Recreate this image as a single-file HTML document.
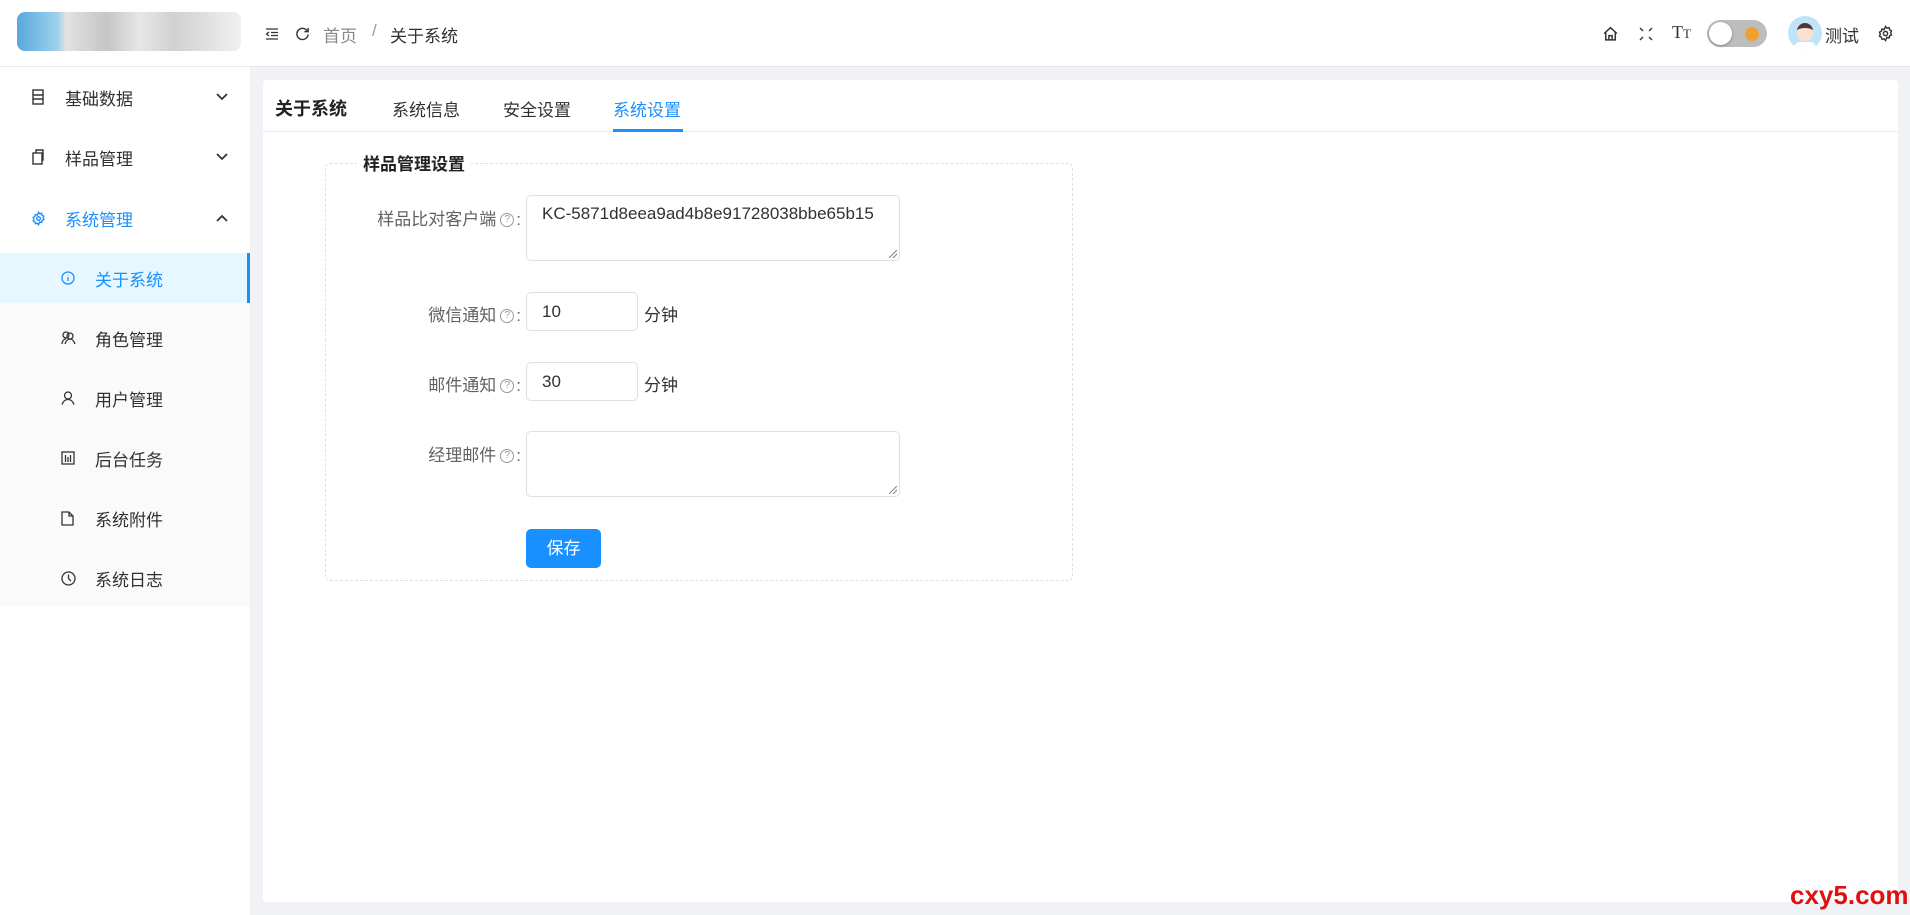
<!DOCTYPE html>
<html><head><meta charset="utf-8"><style>
*{box-sizing:border-box;margin:0;padding:0}
body{width:1910px;height:915px;background:#f0f2f5;font-family:"Liberation Sans","Noto Sans CJK SC",sans-serif;color:#333;position:relative;overflow:hidden;font-size:17px}
.hdr{position:absolute;left:0;top:0;width:1910px;height:67px;background:#fff;border-bottom:1px solid #e6e8eb}
.abs{position:absolute}
.side{position:absolute;left:0;top:67px;width:250px;height:848px;background:#fff}
.item{position:absolute;left:0;width:250px;height:60px;display:flex;align-items:center;font-size:17px;color:#303133}
.item svg{position:absolute}
.sub{background:#fafafa}
.card{position:absolute;left:263px;top:80px;width:1635px;height:822px;background:#fff;border-radius:4px}
.tabs{position:absolute;left:0;top:0;width:100%;height:52px;border-bottom:1px solid #e8eaec}
.fs{position:absolute;left:325px;top:163px;width:748px;height:418px;border:1px dashed #dcdfe6;border-radius:5px}
.lbl{position:absolute;right:1389px;font-size:17px;color:#606266;white-space:nowrap;text-align:right}
.q{display:inline-block;width:14px;height:14px;border:1px solid #999;border-radius:50%;font-size:10px;line-height:12px;text-align:center;color:#999;vertical-align:3px;margin:0 2px 0 4px}
.inp{position:absolute;left:526px;border:1px solid #dcdfe6;border-radius:5px;background:#fff;padding:0 15px;font-size:17px;color:#303133}
.rz{position:absolute;right:2px;bottom:2px;width:8px;height:8px;background:linear-gradient(135deg,transparent 45%,#888 45%,#888 55%,transparent 55%,transparent 70%,#888 70%,#888 80%,transparent 80%)}
</style></head><body>
<div class="hdr">
 <div class="abs" style="left:17px;top:12px;width:224px;height:39px;border-radius:8px;background:linear-gradient(90deg,#3a9ad6 0,#8cc8ea 18%,#ddd 22%,#bbb 40%,#e3e3e3 55%,#c8c8c8 70%,#eee 100%);opacity:.85"></div>
 <svg class="abs" style="left:265px;top:27px" width="14" height="14" viewBox="0 0 14 14" fill="none" stroke="#333" stroke-width="1.3"><path d="M1 2h12M6 5.5h7M6 8.5h7M1 12h12M4 5L1.5 7 4 9"/></svg>
 <svg class="abs" style="left:295px;top:26px" width="15" height="15" viewBox="0 0 16 16" fill="none" stroke="#333" stroke-width="1.5"><path d="M13.5 6A6 6 0 1 0 14 9"/><path d="M14 2v4h-4"/></svg>
 <div class="abs" style="left:323px;top:22px;font-size:17px;color:#888">首页</div>
 <div class="abs" style="left:372px;top:21px;font-size:17px;color:#999">/</div>
 <div class="abs" style="left:390px;top:22px;font-size:17px;color:#303133">关于系统</div>
 <svg class="abs" style="left:1602px;top:25px" width="17" height="17" viewBox="0 0 16 16" fill="none" stroke="#333" stroke-width="1.4"><path d="M2 8L8 2.5 14 8M3.5 6.5V14h9V6.5M6.5 14v-4h3v4"/></svg>
 <svg class="abs" style="left:1639px;top:27px" width="14" height="14" viewBox="0 0 14 14" fill="none" stroke="#333" stroke-width="1.4"><path d="M1 1l3 3M13 1l-3 3M1 13l3-3M13 13l-3-3"/></svg>
 <div class="abs" style="left:1672px;top:22px;font-family:'Liberation Serif',serif;font-size:18px;color:#333">T<span style="font-size:13px">T</span></div>
 <div class="abs" style="left:1707px;top:20px;width:60px;height:27px;border-radius:14px;background:#bdbdbd"><div style="position:absolute;left:2px;top:2px;width:23px;height:23px;border-radius:50%;background:#fff;box-shadow:0 1px 3px rgba(0,0,0,.3)"></div><div style="position:absolute;left:38px;top:7px;width:14px;height:14px;border-radius:50%;background:#f0a030"></div></div>
 <div class="abs" style="left:1788px;top:16px;width:34px;height:34px;border-radius:50%;background:#bfe3f7;overflow:hidden"><div style="position:absolute;left:9px;top:7px;width:16px;height:18px;border-radius:8px;background:#fde2d2;border-top:5px solid #4a3a32"></div><div style="position:absolute;left:6px;top:26px;width:22px;height:12px;background:#fff;border-radius:6px 6px 0 0"></div></div>
 <div class="abs" style="left:1825px;top:22px;font-size:17px;color:#303133">测试</div>
 <svg class="abs" style="left:1877px;top:25px" width="17" height="17" viewBox="0 0 24 24" fill="none" stroke="#333" stroke-width="2"><circle cx="12" cy="12" r="3"/><path d="M12 2l2 2.5 3-.8.8 3 2.7 1.5-1.2 2.8 1.2 2.8-2.7 1.5-.8 3-3-.8L12 22l-2-2.5-3 .8-.8-3-2.7-1.5L4.7 13 3.5 10.2 6.2 8.7l.8-3 3 .8z"/></svg>
</div>
<div class="side">
 <div class="item" style="top:0"><svg style="left:31px" width="14" height="16" viewBox="0 0 14 16" fill="none" stroke="#333" stroke-width="1.4"><rect x="2" y="1" width="10" height="14"/><path d="M2 6h10M2 10h10"/></svg><span style="position:absolute;left:65px">基础数据</span><svg style="left:216px" width="12" height="8" viewBox="0 0 12 8" fill="none" stroke="#333" stroke-width="1.8"><path d="M1 1l5 5 5-5"/></svg></div>
 <div class="item" style="top:60px"><svg style="left:31px" width="14" height="16" viewBox="0 0 14 16" fill="none" stroke="#333" stroke-width="1.4"><rect x="2" y="4" width="9" height="11"/><path d="M5 4V1h7v10h-1"/></svg><span style="position:absolute;left:65px">样品管理</span><svg style="left:216px" width="12" height="8" viewBox="0 0 12 8" fill="none" stroke="#333" stroke-width="1.8"><path d="M1 1l5 5 5-5"/></svg></div>
 <div class="item" style="top:121px;color:#1890ff"><svg style="left:31px" width="15" height="15" viewBox="0 0 24 24" fill="none" stroke="#1890ff" stroke-width="2.2"><circle cx="12" cy="12" r="3"/><path d="M12 2l2 2.5 3-.8.8 3 2.7 1.5-1.2 2.8 1.2 2.8-2.7 1.5-.8 3-3-.8L12 22l-2-2.5-3 .8-.8-3-2.7-1.5L4.7 13 3.5 10.2 6.2 8.7l.8-3 3 .8z"/></svg><span style="position:absolute;left:65px">系统管理</span><svg style="left:216px" width="12" height="8" viewBox="0 0 12 8" fill="none" stroke="#333" stroke-width="1.8"><path d="M1 7l5-5 5 5"/></svg></div>
 <div class="sub abs" style="left:0;top:186px;width:250px;height:354px"></div>
 <div class="item" style="top:186px;height:50px;background:#e6f7ff;color:#1890ff;border-right:3px solid #1890ff"><svg style="left:61px" width="14" height="14" viewBox="0 0 14 14" fill="none" stroke="#1890ff" stroke-width="1.3"><circle cx="7" cy="7" r="6"/><path d="M7 6v4M7 4v.5"/></svg><span style="position:absolute;left:95px">关于系统</span></div>
 <div class="item" style="top:241px"><svg style="left:61px" width="15" height="14" viewBox="0 0 15 14" fill="none" stroke="#333" stroke-width="1.3"><circle cx="5" cy="4" r="3"/><circle cx="9" cy="5" r="3"/><path d="M1 13c0-3 2-5 4-5M4 13c1-3 3-5 5-5s4 2 5 5"/></svg><span style="position:absolute;left:95px">角色管理</span></div>
 <div class="item" style="top:301px"><svg style="left:61px" width="14" height="14" viewBox="0 0 14 14" fill="none" stroke="#333" stroke-width="1.3"><circle cx="7" cy="4.5" r="3.5"/><path d="M1 13.5c1-3 3-5 6-5s5 2 6 5"/></svg><span style="position:absolute;left:95px">用户管理</span></div>
 <div class="item" style="top:361px"><svg style="left:61px" width="14" height="14" viewBox="0 0 14 14" fill="none" stroke="#333" stroke-width="1.3"><rect x="1" y="1" width="12" height="12"/><path d="M4.5 4v7M9.5 4v7M7 6v5"/></svg><span style="position:absolute;left:95px">后台任务</span></div>
 <div class="item" style="top:421px"><svg style="left:61px" width="13" height="15" viewBox="0 0 13 15" fill="none" stroke="#333" stroke-width="1.3"><path d="M1 1h7l4 4v9H1z"/><path d="M8 1v4h4"/></svg><span style="position:absolute;left:95px">系统附件</span></div>
 <div class="item" style="top:481px"><svg style="left:61px" width="15" height="15" viewBox="0 0 15 15" fill="none" stroke="#333" stroke-width="1.3"><circle cx="7.5" cy="7.5" r="6.5"/><path d="M7.5 3.5v4l2.5 2.5"/></svg><span style="position:absolute;left:95px">系统日志</span></div>
</div>
<div class="card">
 <div class="tabs">
  <div class="abs" style="left:12px;top:15px;font-size:18px;font-weight:bold;color:#222">关于系统</div>
  <div class="abs" style="left:129px;top:16px;color:#303133">系统信息</div>
  <div class="abs" style="left:240px;top:16px;color:#303133">安全设置</div>
  <div class="abs" style="left:350px;top:16px;color:#1890ff">系统设置</div>
  <div class="abs" style="left:350px;top:49px;width:70px;height:3px;background:#1890ff"></div>
 </div>
</div>
<div class="fs"></div>
<div class="abs" style="left:357px;top:150px;padding:0 6px;background:#fff;font-weight:bold;font-size:17px;color:#222">样品管理设置</div>
<div class="lbl" style="top:205px">样品比对客户端<span class="q">?</span>:</div>
<div class="inp" style="top:195px;width:374px;height:66px;padding-top:8px">KC-5871d8eea9ad4b8e91728038bbe65b15<div class="rz"></div></div>
<div class="lbl" style="top:301px">微信通知<span class="q">?</span>:</div>
<div class="inp" style="top:292px;width:112px;height:39px;line-height:37px">10</div>
<div class="abs" style="left:644px;top:301px;color:#303133">分钟</div>
<div class="lbl" style="top:371px">邮件通知<span class="q">?</span>:</div>
<div class="inp" style="top:362px;width:112px;height:39px;line-height:37px">30</div>
<div class="abs" style="left:644px;top:371px;color:#303133">分钟</div>
<div class="lbl" style="top:441px">经理邮件<span class="q">?</span>:</div>
<div class="inp" style="top:431px;width:374px;height:66px"><div class="rz"></div></div>
<div class="abs" style="left:526px;top:529px;width:75px;height:39px;border-radius:5px;background:#1890ff;color:#fff;text-align:center;line-height:39px;font-size:17px">保存</div>
<div class="abs" style="left:1790px;top:880px;color:#e01010;font-weight:bold;font-size:26px;font-family:'Liberation Sans',sans-serif">cxy5.com</div>
</body></html>
